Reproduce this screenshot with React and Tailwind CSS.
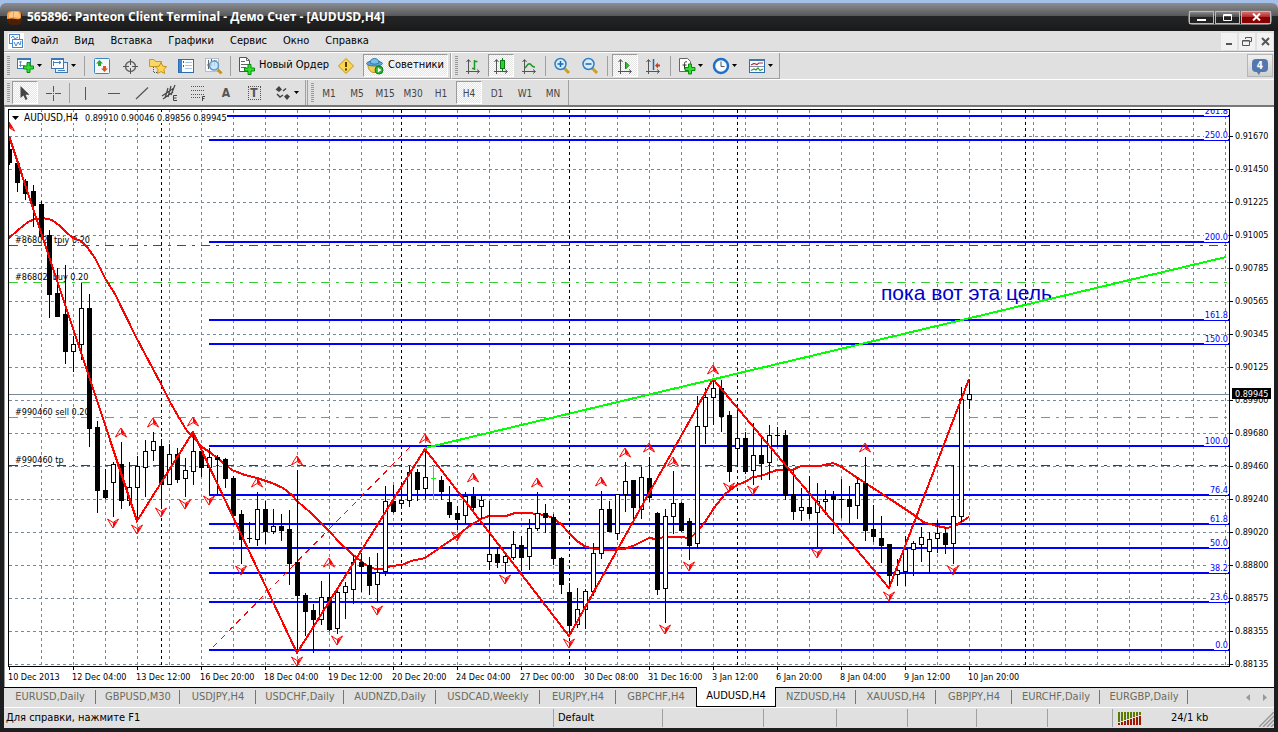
import React from "react";

/* ---------- chart data ---------- */

// one row per bar: [high, body top, body bottom, low, kind]; b = bearish, w = bullish, d = doji
const BARS = [
  [136, 149, 162, 164, "b"], [160, 163, 182, 191, "b"], [179, 181, 193, 199, "b"], [185, 191, 205, 226, "b"],
  [201, 204, 236, 236, "b"], [230, 235, 294, 317, "b"], [268, 293, 316, 316, "b"], [265, 314, 351, 363, "b"],
  [336, 344, 351, 371, "w"], [283, 308, 344, 359, "w"], [294, 308, 428, 446, "b"], [421, 427, 490, 512, "b"],
  [469, 490, 497, 498, "b"], [462, 464, 482, 516, "w"], [442, 464, 500, 508, "b"], [462, 487, 500, 505, "w"],
  [456, 466, 487, 521, "w"], [440, 451, 467, 496, "w"], [432, 441, 450, 460, "w"], [439, 446, 484, 508, "b"],
  [444, 454, 484, 484, "w"], [448, 454, 479, 482, "b"], [458, 470, 478, 496, "w"], [432, 451, 471, 484, "w"],
  [447, 451, 467, 476, "b"], [448, 457, 467, 493, "w"], [455, 457, 459, 493, "b"], [458, 459, 478, 487, "b"],
  [476, 478, 515, 515, "b"], [510, 514, 539, 563, "b"], [522, 538, 538, 542, "d"], [492, 509, 539, 545, "w"],
  [501, 509, 531, 543, "b"], [509, 526, 531, 533, "w"], [514, 526, 530, 540, "b"], [510, 529, 563, 584, "b"],
  [470, 562, 595, 653, "b"], [593, 595, 611, 635, "b"], [604, 610, 619, 652, "b"], [581, 597, 619, 624, "w"],
  [572, 597, 629, 630, "b"], [589, 592, 628, 633, "w"], [582, 586, 592, 618, "w"], [555, 562, 589, 603, "w"],
  [553, 562, 566, 591, "b"], [557, 565, 585, 594, "b"], [553, 572, 584, 602, "w"], [486, 501, 571, 575, "w"],
  [485, 501, 511, 512, "b"], [486, 500, 503, 505, "w"], [466, 472, 500, 506, "w"], [469, 472, 489, 500, "b"],
  [449, 477, 488, 498, "w"], [465, 478, 478, 499, "g"], [476, 480, 491, 499, "b"], [486, 502, 514, 517, "b"],
  [506, 513, 519, 529, "b"], [492, 496, 515, 523, "w"], [487, 496, 507, 513, "b"], [496, 500, 506, 518, "w"],
  [501, 554, 561, 569, "w"], [547, 554, 562, 567, "b"], [553, 556, 562, 572, "w"], [531, 544, 557, 559, "w"],
  [536, 545, 557, 570, "b"], [519, 528, 556, 569, "w"], [492, 513, 528, 530, "w"], [504, 513, 517, 532, "b"],
  [514, 517, 558, 564, "b"], [557, 558, 584, 593, "b"], [583, 592, 625, 636, "b"], [588, 609, 624, 627, "w"],
  [589, 591, 609, 628, "w"], [543, 553, 591, 595, "w"], [491, 509, 553, 558, "w"], [501, 509, 531, 531, "b"],
  [494, 494, 533, 539, "w"], [462, 481, 494, 511, "w"], [480, 480, 507, 518, "b"], [467, 477, 509, 518, "w"],
  [457, 478, 497, 501, "b"], [512, 513, 589, 594, "b"], [509, 516, 588, 622, "w"], [471, 503, 516, 533, "w"],
  [502, 503, 530, 531, "b"], [518, 521, 545, 559, "b"], [396, 426, 543, 548, "w"], [388, 397, 426, 443, "w"],
  [379, 388, 397, 424, "w"], [380, 388, 416, 431, "b"], [411, 415, 471, 481, "b"], [410, 438, 448, 465, "w"],
  [432, 438, 471, 473, "b"], [423, 455, 470, 484, "w"], [436, 455, 463, 479, "b"], [425, 435, 462, 479, "w"],
  [427, 435, 435, 446, "d"], [430, 435, 495, 499, "b"], [470, 494, 511, 519, "b"], [488, 507, 510, 520, "w"],
  [476, 507, 513, 518, "b"], [483, 501, 512, 546, "w"], [490, 499, 501, 514, "w"], [491, 495, 499, 533, "b"],
  [479, 499, 499, 517, "d"], [486, 499, 506, 523, "b"], [477, 483, 505, 518, "w"], [457, 483, 530, 540, "b"],
  [505, 529, 536, 541, "b"], [516, 538, 545, 562, "b"], [544, 544, 575, 588, "b"], [559, 570, 574, 585, "w"],
  [536, 549, 571, 585, "w"], [541, 543, 549, 575, "w"], [527, 537, 544, 561, "w"], [532, 539, 551, 573, "w"],
  [520, 533, 538, 552, "w"], [527, 533, 544, 553, "b"], [465, 516, 543, 563, "w"], [387, 399, 516, 521, "w"],
  [379, 394, 399, 408, "w"],
];

const ZIGZAG = "9,136 137,521 193,432 297,653 425,449 569,636 713,379 889,588 969,379";
const AVERAGE =
  "9,238 18,230 28,222 35,219 43,218 52,220 60,226 66,232 73,238 81,241 87,247 95,258 105,278 115,294 136,337 161,384 170,402 178,416 187,431 193,437 202,447 211,453 222,462 232,470 245,475 257,478 272,483 283,488 292,495 297,501 311,513 329,531 340,543 352,554 366,565 375,569 383,569 391,566 402,565 411,561 425,558 441,547 457,536 468,527 481,519 489,516 506,516 515,513 529,513 545,515 553,518 561,524 569,533 577,541 586,547 597,549 609,550 624,549 633,546 649,538 656,539 664,537 680,537 690,538 697,532 705,522 714,508 725,494 737,485 745,482 753,477 761,476 769,473 777,470 792,470 801,466 820,466 833,463 840,466 856,477 873,488 893,501 917,517 923,522 937,526 947,528 955,526 961,522 969,517";

const FIBO = [
  [116, "261.8"], [140, "250.0"], [242, "200.0"], [320, "161.8"], [344, "150.0"], [446, "100.0"],
  [495, "76.4"], [524, "61.8"], [548, "50.0"], [573, "38.2"], [602, "23.6"], [650, "0.0"],
];

const UP = [
  [9, 122], [121, 428], [153, 418], [193, 417], [297, 456], [257, 478], [329, 558], [425, 434], [473, 473], [537, 478],
  [601, 477], [625, 448], [649, 443], [673, 457], [713, 365], [865, 443],
];
const DOWN = [
  [113, 528], [137, 534], [161, 517], [185, 509], [209, 505], [241, 575], [297, 666], [337, 645], [377, 615], [457, 541],
  [505, 584], [569, 648], [665, 634], [689, 571], [729, 492], [753, 495], [817, 558], [889, 601], [953, 575],
];

const PRICES = [
  "0.91670", "0.91450", "0.91225", "0.91005", "0.90785", "0.90565", "0.90345", "0.90125", "0.89900",
  "0.89680", "0.89460", "0.89240", "0.89020", "0.88800", "0.88575", "0.88355", "0.88135",
];
const DATES = [
  "10 Dec 2013", "12 Dec 04:00", "13 Dec 12:00", "16 Dec 20:00", "18 Dec 04:00", "19 Dec 12:00", "20 Dec 20:00",
  "24 Dec 04:00", "27 Dec 00:00", "30 Dec 08:00", "31 Dec 16:00", "3 Jan 12:00", "6 Jan 20:00", "8 Jan 04:00",
  "9 Jan 12:00", "10 Jan 20:00",
];
const ORDERS = [
  [245, "#ff0000", "#86802", 243],
  [282, "#32cd32", "#86802  buy 0.20", 280],
  [417, "#32cd32", "#990460 sell 0.20", 415],
  [465, "#dd0000", "#990460 tp", 463],
];

function Bar({ x, bar }) {
  const [high, top, bottom, low, kind] = bar;
  const ink = kind === "g" ? "#00ff00" : "#000";
  return (
    <g>
      <rect x={x} y={high} width="1" height={low - high + 1} fill={ink} />
      {kind === "d" || kind === "g" ? (
        <rect x={x - 2} y={top} width="5" height="1" fill={ink} />
      ) : kind === "b" ? (
        <rect x={x - 2} y={top} width="5" height={bottom - top + 1} fill="#000" />
      ) : (
        <rect x={x - 1.5} y={top + 0.5} width="4" height={bottom - top} fill="#fff" stroke="#000" />
      )}
    </g>
  );
}

function Chart() {
  const cols = Array.from({ length: 38 }, (_, i) => 41 + i * 32);
  return (
    <svg
      width="1268"
      height="580"
      viewBox="5 107 1268 580"
      className="block shrink-0 font-['DejaVu_Sans_Condensed','Noto_Sans',sans-serif] text-[9px]"
      role="img"
      aria-label="AUDUSD,H4"
    >
      <defs>
        <clipPath id="plot">
          <rect x="9" y="110" width="1220" height="556" />
        </clipPath>
      </defs>
      <g clipPath="url(#plot)">
        <g stroke="#778899" strokeDasharray="3 3" shapeRendering="crispEdges">
          {cols.map((x) => (
            <line key={x} x1={x + 0.5} x2={x + 0.5} y1="110" y2="666" />
          ))}
          {PRICES.map((p, i) => (
            <line key={p} x1="9" x2="1229" y1={136.5 + i * 33} y2={136.5 + i * 33} />
          ))}
        </g>
        <g stroke="#000" strokeDasharray="3 3" shapeRendering="crispEdges">
          {[161, 401, 569, 737, 1025].map((x) => (
            <line key={x} x1={x + 0.5} x2={x + 0.5} y1="110" y2="666" />
          ))}
        </g>
        <g shapeRendering="crispEdges">
          {ORDERS.map(([y, color]) => (
            <line key={y} x1="9" x2="1229" y1={y + 0.5} y2={y + 0.5} stroke={color} strokeDasharray="9 6 3 6" />
          ))}
          <rect x="9" y="394" width="1220" height="1" fill="#778899" />
          {FIBO.map(([y]) => (
            <rect key={y} x="209" y={y - 1} width="1020" height="2" fill="#0000ff" />
          ))}
        </g>
        <line x1="213" y1="647" x2="410" y2="447" stroke="#ff0000" strokeDasharray="6 5" shapeRendering="crispEdges" />
        {ORDERS.map(([y, , label, base]) => (
          <text key={y} x="15" y={base} xmlSpace="preserve">
            {label}
          </text>
        ))}
        <text x="54" y="243">tpiy 0.20</text>
        <polyline points={AVERAGE} fill="none" stroke="#ff0000" strokeWidth="2" shapeRendering="crispEdges" />
        <g shapeRendering="crispEdges">
          {BARS.map((bar, i) => (
            <Bar key={i} x={9 + i * 8} bar={bar} />
          ))}
        </g>
        <polyline points={ZIGZAG} fill="none" stroke="#ff0000" strokeWidth="2" shapeRendering="crispEdges" />
        <g stroke="#ff0000" strokeWidth="1">
          {UP.map(([x, y]) => (
            <g key={x} transform={`translate(${x} ${y})`}>
              <path d="M0 0L-3 4.500L-5.500 9L0 5.500L5.500 9L3 4.500Z" fill="none" />
              <path d="M0 0L3 4.500L3.500 7L0 5Z" fill="#ff0000" stroke="none" />
            </g>
          ))}
          {DOWN.map(([x, y]) => (
            <g key={x} transform={`translate(${x} ${y})`}>
              <path d="M0 0L-2.500 -4L-5.500 -9L0 -5.500L5.500 -9L2.500 -4Z" fill="none" />
              <path d="M0 0L2.500 -4L3.500 -7L0 -5Z" fill="#ff0000" stroke="none" />
            </g>
          ))}
        </g>
        <text x="881" y="300" className="font-['Liberation_Sans',sans-serif] text-[21px]" fill="#0000cd">
          пока вот эта цель
        </text>
        <line x1="425" y1="448" x2="1226" y2="257" stroke="#00ff00" strokeWidth="2" shapeRendering="crispEdges" />
        {FIBO.map(([y, label]) => (
          <g key={y} fill="#0000ff">
            <rect x={label.length === 5 ? 1204 : label.length === 4 ? 1209 : 1214} y={y - 9} width={label.length === 5 ? 24 : label.length === 4 ? 19 : 14} height="9" fill="#fff" />
            <text x="1228" y={y - 2} textAnchor="end">
              {label}
            </text>
          </g>
        ))}
        <rect x="10" y="112" width="217" height="11" fill="#fff" />
        <path d="M12 116H19L15.500 120Z" />
        <text x="24" y="121" className="text-[10px]">AUDUSD,H4</text>
        <text x="85" y="121">0.89910 0.90046 0.89856 0.89945</text>
      </g>
      <path d="M8.500 109.500H1229.500V666.500H8.500Z" fill="none" stroke="#000" shapeRendering="crispEdges" />
      {PRICES.map((p, i) => (
        <g key={p}>
          <rect x="1230" y={136 + i * 33} width="3" height="1" />
          <text x="1235" y={139 + i * 33}>{p}</text>
        </g>
      ))}
      <rect x="1232" y="388" width="39" height="11" />
      <text x="1235" y="397" fill="#fff">0.89945</text>
      {DATES.map((d, i) => (
        <g key={d}>
          <rect x={9 + i * 64} y="667" width="1" height="3" />
          <text x={8 + i * 64} y="680">{d}</text>
        </g>
      ))}
    </svg>
  );
}

/* ---------- icons ---------- */

function Svg({ children, w = 18, label }) {
  return (
    <svg width={w} height="18" viewBox={`0 0 ${w} 18`} className="shrink-0" aria-label={label}>
      {children}
    </svg>
  );
}

const Plus = ({ x, y }) => (
  <path
    transform={`translate(${x} ${y})`}
    d="M4 0.500H7V4H10.500V7H7V10.500H4V7H0.500V4H4Z"
    fill="#2fe02f"
    stroke="#0a8a12"
  />
);
const Axes = () => (
  <path d="M4.500 3V17M2 14.500H15M2.500 5L4.500 2.500L6.500 5M13 12.500L15.500 14.500L13 16.500" fill="none" stroke="#555" />
);

const icons = {
  newChart: (
    <Svg>
      <rect x="0.500" y="1.500" width="13" height="10" fill="#fff" stroke="#3b78b8" />
      <rect x="0" y="1" width="14" height="2" fill="#3b78b8" />
      <path d="M3.500 4V10M2 8.500H8M2 5H5" stroke="#6a93bb" fill="none" />
      <Plus x={6} y={5} />
    </Svg>
  ),
  profiles: (
    <Svg>
      <rect x="4.500" y="5.500" width="12" height="10" fill="#e8f1fb" stroke="#3b78b8" />
      <rect x="0.500" y="1.500" width="12" height="10" fill="#fff" stroke="#3b78b8" />
      <rect x="0" y="1" width="13" height="2" fill="#3b78b8" />
      <path d="M2.500 4V9M2 5.500H10M8 4L10 5.500L8 7M7 13.500H14" stroke="#4a7fb5" fill="none" />
    </Svg>
  ),
  market: (
    <Svg>
      <rect x="1.500" y="1.500" width="15" height="15" rx="1" fill="#f4f9ff" stroke="#3b84c4" />
      <path d="M6.500 3L10 6.500H8V9H5V6.500H3Z" fill="#25a52b" />
      <path d="M11.500 15L8 11.500H10V9H13V11.500H15Z" fill="#e2561e" />
    </Svg>
  ),
  cross: (
    <Svg>
      <circle cx="9.500" cy="9.500" r="5" fill="none" stroke="#666" strokeWidth="1.500" />
      <path d="M9.500 2V8M9.500 11V17M2 9.500H8M11 9.500H17" stroke="#555" />
    </Svg>
  ),
  navigator: (
    <Svg>
      <path d="M0.500 2.500H5L6.500 4.500H12.500V9.500H0.500Z" fill="#f8d768" stroke="#c59a26" />
      <path d="M4.500 10V16M5 15.500H8" stroke="#555" strokeDasharray="1 1" />
      <path d="M12 5.500L13.800 9.200L17.600 9.700L14.900 12.500L15.600 16.500L12 14.600L8.400 16.500L9.100 12.500L6.400 9.700L10.200 9.200Z" fill="#ffd84d" stroke="#c58f1c" />
    </Svg>
  ),
  terminal: (
    <Svg>
      <rect x="1.500" y="2.500" width="15" height="13" fill="#fff" stroke="#2c6db5" />
      <rect x="2" y="3" width="3" height="12" fill="#3d86cf" />
      <path d="M8 5.500H15M8 8.500H15M8 11.500H15" stroke="#a9c5e2" />
      <path d="M6.500 4V12" stroke="#d22" strokeDasharray="2 2" />
    </Svg>
  ),
  tester: (
    <Svg>
      <rect x="0.500" y="1.500" width="13" height="13" fill="#f6fafd" stroke="#b5bec8" />
      <path d="M3.500 3V12M6.500 2V9M9.500 3V9M2 8H6M9 4H12" stroke="#666" />
      <circle cx="9" cy="8.500" r="4.500" fill="#bfe2fb" fillOpacity="0.850" stroke="#5a9bd0" strokeWidth="1.500" />
      <path d="M12.500 12.500L16.500 16.500" stroke="#c9941c" strokeWidth="3" />
    </Svg>
  ),
  order: (
    <Svg>
      <path d="M1.500 0.500H8.500L11.500 3.500V14.500H1.500Z" fill="#fff" stroke="#555" />
      <path d="M8.500 0.500V3.500H11.500M3 4.500H7M3 7.500H10M3 10.500H8" fill="none" stroke="#666" />
      <Plus x={6} y={7} />
    </Svg>
  ),
  warn: (
    <Svg>
      <path d="M9 1.500L16.500 9L9 16.500L1.500 9Z" fill="#fbd84a" stroke="#c0921d" strokeLinejoin="round" />
      <path d="M9 5V10M9 11.500V13.500" stroke="#5a3c00" strokeWidth="2" />
    </Svg>
  ),
  expert: (
    <Svg>
      <path d="M2 8C2 18 14 18 14 8Z" fill="#f3cd4d" stroke="#c1932a" />
      <ellipse cx="8.500" cy="6.500" rx="8" ry="2.500" fill="#5fa8da" stroke="#2e77ab" />
      <path d="M4 6C4 0 13 0 13 6C11 7.500 6 7.500 4 6Z" fill="#7cc0e8" stroke="#2e77ab" />
      <circle cx="13" cy="13" r="4" fill="#2bb52f" stroke="#0e7c17" />
      <path d="M11.800 10.500V15.500L15.500 13Z" fill="#fff" />
    </Svg>
  ),
  bars: (
    <Svg>
      <Axes />
      <path d="M10.500 3V13M10 11.500H8M11 4.500H13.500" stroke="#1b9a22" strokeWidth="1.500" />
    </Svg>
  ),
  candles: (
    <Svg>
      <Axes />
      <path d="M10.500 1V14" stroke="#0c7a13" />
      <rect x="8.500" y="3.500" width="4" height="8" fill="#2fd036" stroke="#0c7a13" />
    </Svg>
  ),
  line: (
    <Svg>
      <Axes />
      <path d="M5 11C7 9 8 6 10 7S12 10 15 10" stroke="#1b9a22" fill="none" strokeWidth="1.500" />
    </Svg>
  ),
  zoomIn: (
    <Svg>
      <path d="M11 11L16 16" stroke="#c9a020" strokeWidth="3" />
      <circle cx="7.500" cy="7" r="5.500" fill="#d6edfc" stroke="#2f7fc4" strokeWidth="1.500" />
      <path d="M7.500 4V10M4.500 7H10.500" stroke="#2265a8" strokeWidth="1.500" />
    </Svg>
  ),
  zoomOut: (
    <Svg>
      <path d="M11 11L16 16" stroke="#c9a020" strokeWidth="3" />
      <circle cx="7.500" cy="7" r="5.500" fill="#d6edfc" stroke="#2f7fc4" strokeWidth="1.500" />
      <path d="M4.500 7H10.500" stroke="#2265a8" strokeWidth="1.500" />
    </Svg>
  ),
  scroll: (
    <Svg>
      <Axes />
      <path d="M9.500 5V12L13 8.500Z" fill="#2fc036" stroke="#0c8a13" />
    </Svg>
  ),
  shift: (
    <Svg>
      <Axes />
      <path d="M9.500 2V13" stroke="#2265a8" strokeWidth="1.500" />
      <path d="M11 8.500L14 5.500V7.500H16V9.500H14V11.500Z" fill="#c8401c" />
    </Svg>
  ),
  indicator: (
    <Svg>
      <path d="M1.500 1.500H9.500L12.500 4.500V14.500H1.500Z" fill="#fff" stroke="#666" />
      <path d="M9 5C6.500 4 6.500 6 6.500 8V12M4.500 8H8.500" fill="none" stroke="#333" />
      <Plus x={6.500} y={6.500} />
    </Svg>
  ),
  clock: (
    <Svg>
      <circle cx="9" cy="9" r="7" fill="#f6fbff" stroke="#1f6fc9" strokeWidth="2.500" />
      <path d="M9 4.500V9.500H12.500" fill="none" stroke="#555" />
    </Svg>
  ),
  template: (
    <Svg>
      <rect x="1.500" y="2.500" width="15" height="13" fill="#fff" stroke="#2c6db5" />
      <rect x="1" y="2" width="16" height="2" fill="#3b78b8" />
      <path d="M2 9.500H16" stroke="#88a" />
      <path d="M3 8L6 6.500L9 7.500L11 6L15 6" stroke="#a33" fill="none" strokeWidth="1.200" />
      <path d="M3 13.500L6 12L8 13L10 11L12 13.500L15 12" stroke="#2a9a33" fill="none" strokeWidth="1.200" />
    </Svg>
  ),
  cursor: (
    <Svg>
      <path d="M4.500 2V14L7.500 11.500L9.500 16L11.500 15L9.500 10.800H13.500Z" fill="#444" />
    </Svg>
  ),
  plusThin: (
    <Svg>
      <path d="M9.500 2V8M9.500 11V17M2 9.500H8M11 9.500H17" stroke="#555" />
      <rect x="9" y="9" width="1" height="1" fill="#555" />
    </Svg>
  ),
  vline: <Svg><path d="M8.500 3V16" stroke="#555" /></Svg>,
  hline: <Svg><path d="M3 9.500H15" stroke="#555" /></Svg>,
  trend: <Svg><path d="M3 15L15 3.500" stroke="#555" strokeWidth="1.200" /></Svg>,
  channel: (
    <Svg>
      <path d="M1 12L13 4M2 15L12 8M4 14L7 4M7 13L10 2M10 11L14 1" stroke="#444" strokeWidth="1.200" />
      <path d="M16 11.500H12.500V16.500H16M12.500 14H15.500" fill="none" stroke="#444" />
    </Svg>
  ),
  fibo: (
    <Svg>
      <path d="M2 2.500H16M2 6.500H16M2 10.500H16M2 13.500H11" stroke="#555" strokeDasharray="1 1" />
      <path d="M16 12.500H13.500V17M13.500 14.500H15.500" fill="none" stroke="#444" />
    </Svg>
  ),
  arrows: (
    <Svg>
      <path d="M5 2L8 5.500L5 8L1.500 5.500ZM13 10L16 12.500L13 16L10 12.500Z" fill="#444" />
      <path d="M3 10L6 13L9 11M9 7L12 4.500" fill="none" stroke="#444" strokeWidth="1.500" />
    </Svg>
  ),
};

/* ---------- controls ---------- */

const PRESSED =
  "border border-t-[#9a9a9a] border-l-[#9a9a9a] border-r-white border-b-white bg-[repeating-conic-gradient(#fff_0_25%,#e4e4e4_0_50%)] bg-[length:2px_2px]";

function Tool({ icon, label, pressed, drop }) {
  return (
    <button
      type="button"
      aria-label={label}
      aria-pressed={pressed}
      className={`flex h-[23px] shrink-0 items-center justify-center ${drop ? "w-[34px] gap-px" : pressed ? "mx-px w-[26px]" : "w-7"} ${pressed ? PRESSED : ""}`}
    >
      {icons[icon]}
      {drop && <Caret />}
    </button>
  );
}

const Caret = () => (
  <svg width="7" height="4" viewBox="0 0 7 4" className="shrink-0">
    <path d="M1 0H6L3.500 3Z" fill="#000" />
  </svg>
);
const Sep = ({ tight }) => <span className={`h-5 w-px shrink-0 bg-[#a0a0a0] ${tight ? "mx-[2px]" : "mx-[3px]"}`} />;
const Grip = () => (
  <span className="mr-px ml-[3px] h-[19px] w-[3px] shrink-0 bg-[repeating-linear-gradient(#999_0_1px,#e0e0e0_1px_2px)]" />
);

const MENU = ["Файл", "Вид", "Вставка", "Графики", "Сервис", "Окно", "Справка"];
const FRAMES = ["M1", "M5", "M15", "M30", "H1", "H4", "D1", "W1", "MN"];
const TABS = [
  ["EURUSD,Daily", "w-23"], ["GBPUSD,M30", "w-21"], ["USDJPY,H4", "w-19"], ["USDCHF,Daily", "w-22"],
  ["AUDNZD,Daily", "w-23"], ["USDCAD,Weekly", "w-26"], ["EURJPY,H4", "w-19"], ["GBPCHF,H4", "w-20"],
  ["AUDUSD,H4", "w-20"], ["NZDUSD,H4", "w-20"], ["XAUUSD,H4", "w-20"], ["GBPJPY,H4", "w-19"],
  ["EURCHF,Daily", "w-22"], ["EURGBP,Daily", "w-22"],
];
const ACTIVE = 8;
const CELLS = ["w-[101px]", "w-[73px]", "w-[71px]", "w-[69px]", "w-[71px]", "w-[65px]"];

function TitleBar() {
  const box = "flex items-center justify-center h-[13px] border border-[#bbb] text-white";
  return (
    <header className="flex h-7 shrink-0 items-center rounded-t-md bg-[linear-gradient(#8b8d90_0,#58595b_45%,#242526_48%,#1a1a1a_100%)] pr-[6px] pl-[6px]">
      <svg width="17" height="17" viewBox="0 0 17 17" className="mr-1">
        <rect x="1" y="2" width="15" height="14" rx="5" fill="#4a2008" />
        <path d="M1 10V6Q1 2 6 2H12Q15 2 15 6V9Q13 11 10 10Q6 9 1 10Z" fill="#ff9a3c" />
        <path d="M3 9V5Q4 3 7 3V8ZM8 8V3H12Q14 5 14 9Z" fill="#ffc98a" />
      </svg>
      <h1 className="flex-1 truncate font-['Open_Sans','Noto_Sans',sans-serif] text-xs font-bold text-white">
        565896: Panteon Client Terminal - Демо Счет - [AUDUSD,H4]
      </h1>
      <div className="flex gap-px rounded-sm border border-[#777]">
        <button type="button" aria-label="Свернуть" className={`${box} w-[25px] bg-[linear-gradient(#888,#444_50%,#222_50%)]`}>
          <svg width="9" height="9"><rect x="0" y="6" width="9" height="2" fill="#fff" /></svg>
        </button>
        <button type="button" aria-label="Развернуть" className={`${box} w-[25px] bg-[linear-gradient(#888,#444_50%,#222_50%)]`}>
          <svg width="9" height="7"><path d="M0.500 0.500H8.500V6.500H0.500ZM0 1.500H9" fill="none" stroke="#fff" /></svg>
        </button>
        <button type="button" aria-label="Закрыть" className={`${box} w-[30px] bg-[linear-gradient(#d87070,#b02020_50%,#8a0000_50%)]`}>
          <svg width="9" height="8"><path d="M1 0.500L8 7.500M8 0.500L1 7.500" stroke="#fff" strokeWidth="2" /></svg>
        </button>
      </div>
    </header>
  );
}

function MenuBar() {
  const child = "flex h-[17px] w-4 items-center justify-center bg-[#f2f2f2]";
  return (
    <nav className="flex h-[21px] shrink-0 items-center border-b border-[#a0a0a0] pr-px pl-1">
      <svg width="16" height="16" viewBox="0 0 16 16" className="mr-[7px] bg-white">
        <rect x="1.500" y="1.500" width="10" height="9" fill="#fff" stroke="#4b86cc" />
        <path d="M3 5L5 3L7 6L10 4" fill="none" stroke="#4b86cc" />
        <rect x="4.500" y="6.500" width="10" height="8" fill="#fff" stroke="#4b86cc" />
        <path d="M6 9L8 13L10 9L12 12L13 8" fill="none" stroke="#4b86cc" />
      </svg>
      <div className="flex flex-1 gap-4">
        {MENU.map((m) => (
          <button key={m} type="button">{m}</button>
        ))}
      </div>
      <div className="flex gap-[2px]">
        <button type="button" aria-label="Свернуть окно" className={child}>
          <svg width="8" height="10"><rect x="1" y="7" width="6" height="2" fill="#555" /></svg>
        </button>
        <button type="button" aria-label="Восстановить окно" className={child}>
          <svg width="10" height="10"><path d="M3.500 3V1.500H9.500V5.500H8M0.500 4.500H7.500V9.500H0.500ZM1 5H7" fill="none" stroke="#555" /></svg>
        </button>
        <button type="button" aria-label="Закрыть окно" className={child}>
          <svg width="9" height="9"><path d="M1 1L8 8M8 1L1 8" stroke="#555" strokeWidth="2" /></svg>
        </button>
      </div>
    </nav>
  );
}

export default function App() {
  return (
    <div className="flex h-screen flex-col overflow-hidden bg-[#a5c0e8] pt-[3px] font-['DejaVu_Sans_Condensed','Noto_Sans',sans-serif] text-[11px] whitespace-nowrap text-black">
      <TitleBar />
      <div className="flex min-h-0 flex-1 flex-col border-x-4 border-b-4 border-[#1d1e20] bg-[#e0e0e0]">
        <MenuBar />
        <div className="flex h-[27px] shrink-0 items-stretch border-t border-white">
          <div className="flex items-center border-r border-b border-[#a0a0a0]">
            <Grip />
            <span className="w-[2px]" />
            <Tool icon="newChart" label="Новый график" drop />
            <Tool icon="profiles" label="Профили" drop />
            <Sep />
            <Tool icon="market" label="Обзор рынка" />
            <Tool icon="cross" label="Окно данных" />
            <Tool icon="navigator" label="Навигатор" />
            <Tool icon="terminal" label="Терминал" />
            <Tool icon="tester" label="Тестер" />
            <Sep tight />
            <button type="button" className="flex h-[23px] w-[99px] items-center gap-[3px] pl-[5px]">
              {icons.order}
              Новый Ордер
            </button>
            <Tool icon="warn" label="MetaEditor" />
            <button type="button" aria-pressed className={`ml-[3px] flex h-[23px] w-[85px] items-center gap-1 pl-[2px] ${PRESSED}`}>
              {icons.expert}
              Советники
            </button>
            <span className="w-[2px]" />
          </div>
          <div className="flex items-center border-r border-b border-l border-[#a0a0a0] border-l-white pr-px">
            <Grip />
            <Tool icon="bars" label="Бары" />
            <Tool icon="candles" label="Свечи" pressed />
            <Tool icon="line" label="Линия" />
            <Sep tight />
            <Tool icon="zoomIn" label="Увеличить" />
            <Tool icon="zoomOut" label="Уменьшить" />
            <Sep />
            <Tool icon="scroll" label="Автопрокрутка" pressed />
            <Tool icon="shift" label="Сдвиг графика" />
            <Sep />
            <Tool icon="indicator" label="Индикаторы" drop />
            <Tool icon="clock" label="Периоды" drop />
            <span className="w-[2px]" />
            <Tool icon="template" label="Шаблоны" drop />
          </div>
          <div className="flex flex-1 justify-end pt-px pr-px">
            <button type="button" aria-label="4 сообщения" className="flex h-[23px] w-[26px] items-center justify-center border border-[#b5b5b5] bg-[linear-gradient(#f0f0f0,#cfcfcf)]">
              <span className="relative flex h-[13px] w-4 items-center justify-center rounded-sm bg-[#5577b0] text-[10px] font-bold text-white">
                4
                <svg width="5" height="4" className="absolute top-[12px] left-1"><path d="M0 0H5L3 4Z" fill="#5577b0" /></svg>
              </span>
            </button>
          </div>
        </div>
        <div className="flex h-[26px] shrink-0 items-stretch border-t border-white text-[10px] text-[#444]">
          <div className="flex items-center border-r border-[#a0a0a0] pr-px">
            <Grip />
            <Tool icon="cursor" label="Курсор" pressed />
            <Tool icon="plusThin" label="Перекрестие" />
            <Sep tight />
            <Tool icon="vline" label="Вертикальная линия" />
            <Tool icon="hline" label="Горизонтальная линия" />
            <Tool icon="trend" label="Трендовая линия" />
            <Tool icon="channel" label="Канал" />
            <Tool icon="fibo" label="Фибоначчи" />
            <button type="button" className="w-7 text-xs font-bold text-[#555]">A</button>
            <button type="button" className="flex w-7 justify-center">
              <span className="flex h-[14px] w-[13px] items-center justify-center border border-dotted border-[#555] text-xs font-bold text-[#555]">T</span>
            </button>
            <span className="w-[2px]" />
            <Tool icon="arrows" label="Стрелки" drop />
          </div>
          <div className="ml-px flex items-center border-r border-l border-[#a0a0a0] pr-px">
            <Grip />
            {FRAMES.map((f) => (
              <button key={f} type="button" aria-pressed={f === "H4"} className={`h-[23px] pt-px ${f === "H4" ? `mx-px w-[26px] ${PRESSED}` : "w-7"}`}>
                {f}
              </button>
            ))}
          </div>
        </div>
        <main className="min-h-0 flex-1 overflow-hidden border-t-2 border-l border-t-[#777] border-l-[#999] bg-white">
          <Chart />
        </main>
        <div className="flex h-5 shrink-0 items-start border-t border-black text-[#6b6b5e]">
          {TABS.map(([t, w], i) =>
            i === ACTIVE ? (
              <button key={t} type="button" aria-current="true" className={`${w} relative -mt-px h-5 shrink-0 border-x border-b border-black bg-white text-black`}>
                {t}
              </button>
            ) : (
              <button key={t} type="button" className={`${w} relative h-[18px] shrink-0`}>
                {t}
                {i !== ACTIVE - 1 && <span className="absolute top-[2px] right-0 h-[14px] w-px bg-[#77776a]" />}
              </button>
            ),
          )}
          <div className="flex flex-1 items-center justify-end gap-3 self-center pr-[6px]">
            <button type="button" aria-label="Назад"><svg width="5" height="7"><path d="M4 0V7L0 3.500Z" fill="#999" /></svg></button>
            <button type="button" aria-label="Вперед"><svg width="5" height="7"><path d="M0 0V7L4 3.500Z" fill="#999" /></svg></button>
          </div>
        </div>
        <footer className="flex h-[21px] shrink-0 items-center border-t border-white">
          <span className="flex-1 pt-px pl-[2px]">Для справки, нажмите F1</span>
          <span className="flex h-[18px] w-[109px] items-center border-l border-[#a0a0a0] pt-px pl-1">Default</span>
          {CELLS.map((w, i) => (
            <span key={i} className={`${w} h-[18px] border-l border-[#a0a0a0]`} />
          ))}
          <span className="flex h-[18px] w-[162px] items-center border-l border-[#a0a0a0] pl-[5px]">
            <svg width="24" height="13" viewBox="0 0 24 13">
              {Array.from({ length: 8 }, (_, i) => (
                <g key={i}>
                  <rect x={i * 3} y="0" width="2" height={10 - i} fill="#5a7a00" />
                  <rect x={i * 3} y={11 - i} width="2" height={2 + i} fill="#a01800" />
                </g>
              ))}
            </svg>
            <span className="flex-1 pt-px pl-[29px]">24/1 kb</span>
            <svg width="15" height="15" className="self-end">
              <path d="M0 15L15 0M4 15L15 4M8 15L15 8M12 15L15 12" stroke="#999" strokeWidth="1.500" />
            </svg>
          </span>
        </footer>
      </div>
    </div>
  );
}
